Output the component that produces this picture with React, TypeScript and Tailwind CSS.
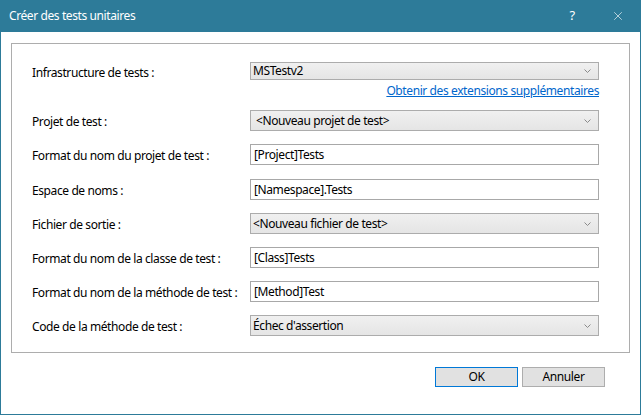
import { X } from "lucide-react";

type Row = {
  label: string;
  value: string;
  kind: "select" | "text";
  gap: string;
  pad?: string;
};

const rows: Row[] = [
  { label: "Projet de test :", value: "<Nouveau projet de test>", kind: "select", gap: "mt-[12px]", pad: "pl-[5px]" },
  { label: "Format du nom du projet de test :", value: "[Project]Tests", kind: "text", gap: "mt-[13px]" },
  { label: "Espace de noms :", value: "[Namespace].Tests", kind: "text", gap: "mt-[14px]" },
  { label: "Fichier de sortie :", value: "<Nouveau fichier de test>", kind: "select", gap: "mt-[13px]" },
  { label: "Format du nom de la classe de test :", value: "[Class]Tests", kind: "text", gap: "mt-[13px]" },
  { label: "Format du nom de la méthode de test :", value: "[Method]Test", kind: "text", gap: "mt-[13px]" },
  { label: "Code de la méthode de test :", value: "Échec d'assertion", kind: "select", gap: "mt-[13px]" },
];

function Chevron() {
  return (
    <svg width="7" height="4" viewBox="0 0 7 4" className="shrink-0">
      <path d="M0.5 0.5 L3.5 3.5 L6.5 0.5" fill="none" stroke="#8a8a8a" strokeWidth="1" />
    </svg>
  );
}

function Select({ value, pad = "pl-[2px]", h = "h-[21px]" }: { value: string; pad?: string; h?: string }) {
  return (
    <div
      className={`flex w-[349px] ${h} items-center justify-between border border-[#acacac] bg-gradient-to-b from-[#f0f0f0] to-[#e5e5e5] ${pad} pr-[7px]`}
    >
      <span className="leading-none whitespace-nowrap">{value}</span>
      <Chevron />
    </div>
  );
}

function TextBox({ value }: { value: string }) {
  return (
    <div className="flex h-[21px] w-[349px] items-center border border-[#a8a8a8] bg-white pl-[3px]">
      <span className="leading-none whitespace-nowrap">{value}</span>
    </div>
  );
}

export default function App() {
  return (
    <div
      className="flex h-[415px] w-[641px] flex-col border-x border-b border-[#2d7b99] bg-white text-[12px] tracking-[-0.4px] text-black"
      style={{ fontFamily: '"Noto Sans", "Open Sans", sans-serif' }}
    >
      {/* Title bar */}
      <div className="-mx-px flex h-[32px] shrink-0 items-center bg-[#2d7b99] text-white">
        <span className="pl-[9px] text-[12px]">Créer des tests unitaires</span>
        <div className="ml-auto flex h-full">
          <div className="flex w-[46px] items-center justify-center text-[13px]">?</div>
          <div className="flex w-[46px] items-center justify-center">
            <X size={14} strokeWidth={1.1} />
          </div>
        </div>
      </div>

      {/* Group box */}
      <div className="mx-[10px] mt-[11px] border border-[#adadad] pt-[18px] pr-[30px] pb-[16px] pl-[20px]">
        <div className="flex h-[18px] items-center">
          <span className="w-[218px] shrink-0 pt-[3px] whitespace-nowrap">Infrastructure de tests :</span>
          <Select value="MSTestv2" h="h-[18px]" />
        </div>
        <div className="mt-[3px] flex h-[15px] justify-end">
          <a href="#" className="leading-[15px] text-[#0066cc] underline">
            Obtenir des extensions supplémentaires
          </a>
        </div>
        {rows.map((r) => (
          <div key={r.label} className={`flex h-[21px] items-center ${r.gap}`}>
            <span className="w-[218px] shrink-0 pt-[3px] whitespace-nowrap">{r.label}</span>
            {r.kind === "select" ? <Select value={r.value} pad={r.pad} /> : <TextBox value={r.value} />}
          </div>
        ))}
      </div>

      {/* Buttons */}
      <div className="mt-[14px] flex justify-end gap-[4px] pr-[35px]">
        <button className="h-[20px] w-[83px] border border-[#0078d7] bg-[#e1e1e1] leading-none">OK</button>
        <button className="h-[20px] w-[83px] border border-[#adadad] bg-[#e1e1e1] leading-none">Annuler</button>
      </div>
    </div>
  );
}
